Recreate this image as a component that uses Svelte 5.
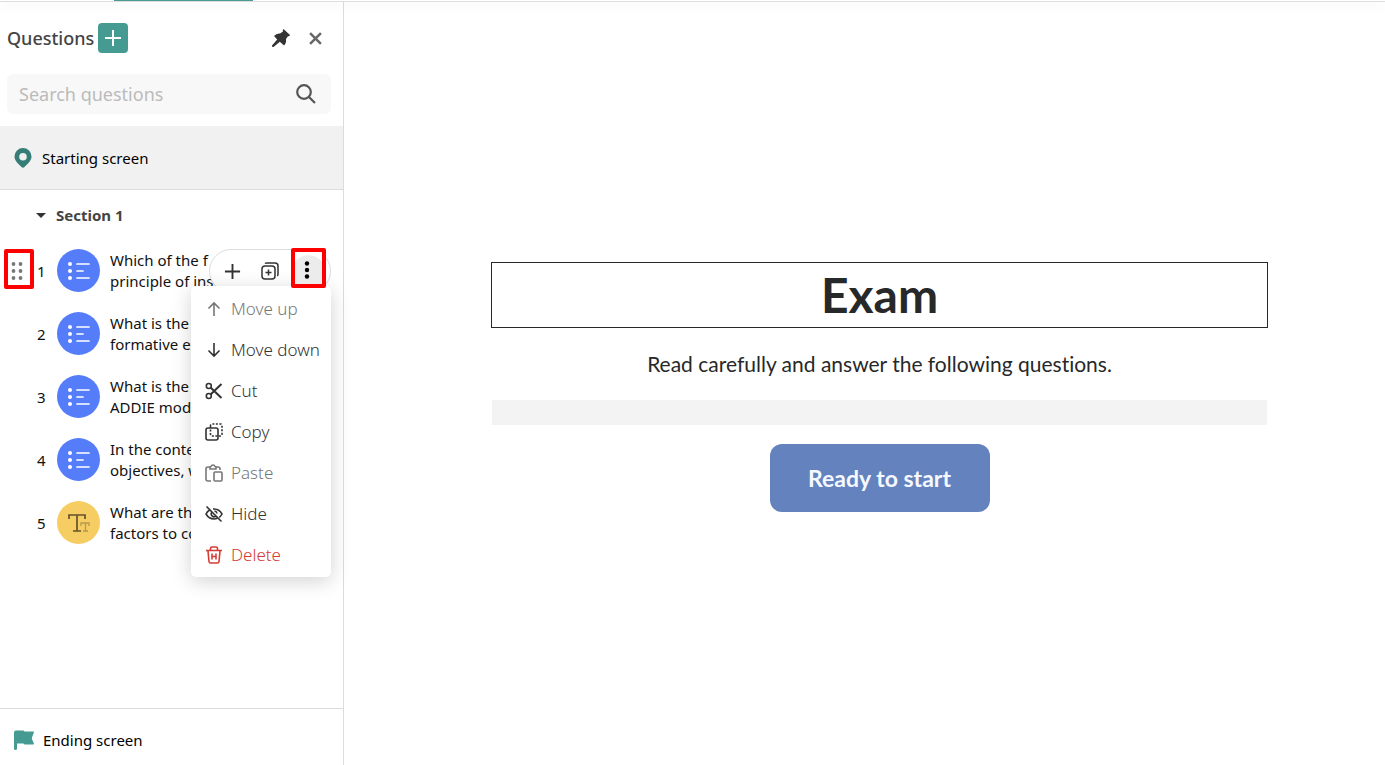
<script lang="ts">
	type Question = { lines: string[]; kind: 'choice' | 'text' }

	const questions: Question[] = [
		{ lines: ['Which of the f', 'principle of ins'], kind: 'choice' },
		{ lines: ['What is the', 'formative e'], kind: 'choice' },
		{ lines: ['What is the', 'ADDIE mod'], kind: 'choice' },
		{ lines: ['In the conte', 'objectives, w'], kind: 'choice' },
		{ lines: ['What are th', 'factors to co'], kind: 'text' },
	]

	const actions = [
		{ id: 'up', label: 'Move up', disabled: true },
		{ id: 'down', label: 'Move down' },
		{ id: 'cut', label: 'Cut' },
		{ id: 'copy', label: 'Copy' },
		{ id: 'paste', label: 'Paste', disabled: true },
		{ id: 'hide', label: 'Hide' },
		{ id: 'delete', label: 'Delete' },
	]

	let search = $state('')
	let menuOpen = $state(true)
</script>

{#snippet actionIcon(id: string)}
	<svg class="action-icon" viewBox="0 0 18 18" aria-hidden="true">
		{#if id === 'up'}
			<path d="M9 16V3M3.5 8.5 9 3l5.5 5.5" />
		{:else if id === 'down'}
			<path d="M9 2v13M3.5 9.5 9 15l5.5-5.5" />
		{:else if id === 'cut'}
			<circle cx="3.8" cy="4" r="2.5" />
			<circle cx="3.8" cy="14" r="2.5" />
			<path d="M5.8 5.7 16.5 16M5.8 12.3 16.5 2" stroke-width="2" />
		{:else if id === 'copy'}
			<rect x="1" y="5" width="12" height="12" rx="2" />
			<path d="M5.5 3.5V2.5Q5.5 1 7 1h8.5Q17 1 17 2.5v9q0 1.5-1.5 1.5H7q-1.5 0-1.5-1.5V3" stroke-dasharray="2 1.5" />
		{:else if id === 'paste'}
			<path d="M6 17H3q-2 0-2-2V5q0-2 2-2h2M11 3h2q2 0 2 2v1" />
			<path d="M5 5V3.5q0-1 1-1Q6.5 1 8 1t2 1.5q1 0 1 1V5z" />
			<rect x="9" y="8" width="8" height="9" rx="1" />
		{:else if id === 'hide'}
			<path d="M5.5 4.5Q2.5 6 1 9q3 5 8 5 1.8 0 3.3-.7M8 4q6-.5 9 5-1 2-2.8 3.3M6.5 7.5a3 3 0 0 0 4 4M9.5 6q2.2.3 2.5 2.500M1.5 1.500l15 15" />
		{:else}
			<path d="M1 4.5h16M5.5 4V2.5Q5.5 1 7 1h4q1.5 0 1.5 1.5V4M3 5l1 10.500Q4.2 17 5.500 17h7q1.300 0 1.500-1.500L15 5" />
			<path d="M7 7.500v6M11 7.500v6M7 10.500h4" />
		{/if}
	</svg>
{/snippet}

<div class="page">
	<div class="topbar"><span class="active-tab"></span></div>

	<div class="workspace">
		<aside class="sidebar">
			<header class="panel-head">
				<h2>Questions</h2>
				<button class="add" aria-label="Add question">
					<svg viewBox="0 0 16 16"><path d="M8 0v16M0 8h16" /></svg>
				</button>
				<button class="icon-btn pin" aria-label="Pin panel">
					<svg viewBox="0 0 18 18">
						<path d="M11.500 0 18 6Q17.500 7.500 16 7.200L14 10Q14.500 14 12 16.500L7.800 12.800 1.500 18 0 17.800V16.500L5.200 10.500 2 7Q4.500 4 8 4.500L11 2.500Q10.300 1 11.500 0Z" />
					</svg>
				</button>
				<button class="icon-btn close" aria-label="Close panel">
					<svg viewBox="0 0 12 12"><path d="M1 1l10 10M11 1 1 11" /></svg>
				</button>
			</header>

			<label class="search">
				<input type="text" placeholder="Search questions" aria-label="Search questions" bind:value={search} />
				<svg viewBox="0 0 20 20" aria-hidden="true">
					<circle cx="8" cy="8" r="6.8" />
					<path d="M13 13l6 6" />
				</svg>
			</label>

			<a class="screen-link starting" href="#starting">
				<svg viewBox="0 0 18 20" aria-hidden="true">
					<path fill-rule="evenodd" d="M9 0a8.5 8.5 0 0 1 8.5 8.5c0 4-3 6.5-7 10.5q-1.5 1.3-3 0c-4-4-7-6.5-7-10.5A8.5 8.5 0 0 1 9 0zm0 5a3.8 3.8 0 1 0 0 7.6A3.8 3.8 0 0 0 9 5z" />
				</svg>
				Starting screen
			</a>

			<button class="section-head">
				<svg viewBox="0 0 10 5" aria-hidden="true"><path d="M0 0h10L5 5z" /></svg>
				Section 1
			</button>

			<ol class="questions">
				{#each questions as question, i}
					<li>
						{#if i === 0}
							<button class="drag marked" aria-label="Drag question">
								<svg viewBox="0 0 12 20">
									{#each [3, 10, 17] as y}
										<circle cx="2.5" cy={y} r="1.9" />
										<circle cx="9.5" cy={y} r="1.9" />
									{/each}
								</svg>
							</button>
						{/if}
						<span class="number">{i + 1}</span>
						<span class="badge {question.kind}">
							{#if question.kind === 'choice'}
								<svg viewBox="0 0 22 16" aria-hidden="true">
									<g class="dots">
										<circle cx="2" cy="1" r="2" />
										<circle cx="2" cy="8" r="2" />
										<circle cx="2" cy="15" r="2" />
									</g>
									<path d="M9 1h12M9 8h6M9 15h12" />
								</svg>
							{:else}
								<svg viewBox="0 0 22 18" aria-hidden="true">
									<path d="M1 5V1h16v4M9 1v16M5 17h8" />
									<path class="small" d="M13 12V9h8v3M17.500 9v8M15 17h5" />
								</svg>
							{/if}
						</span>
						<span class="text">
							{#each question.lines as line}
								<span>{line}</span>
							{/each}
						</span>

						{#if i === 0}
							<div class="tools">
								<button class="tool" aria-label="Add below">
									<svg viewBox="0 0 18 18"><path d="M9 1v16M1 9h16" stroke-width="2" /></svg>
								</button>
								<button class="tool" aria-label="Duplicate">
									<svg viewBox="0 0 18 18">
										<rect x="1" y="4" width="13" height="13" rx="3" />
										<path d="M4 1.5Q4.5 1 6 1h8q3 0 3 3v8q0 1.5-.7 2M7.5 7.5v6M4.5 10.5h6" />
									</svg>
								</button>
								<button class="more marked" aria-label="More actions" onclick={() => (menuOpen = !menuOpen)}>
									<svg viewBox="0 0 6 18">
										<circle cx="3" cy="2.5" r="2.2" />
										<circle cx="3" cy="9" r="2.2" />
										<circle cx="3" cy="15.5" r="2.2" />
									</svg>
								</button>
							</div>

							{#if menuOpen}
								<div class="menu">
									{#each actions as action}
										<button class={action.id} disabled={action.disabled}>
											{@render actionIcon(action.id)}
											{action.label}
										</button>
									{/each}
								</div>
							{/if}
						{/if}
					</li>
				{/each}
			</ol>

			<a class="screen-link ending" href="#ending">
				<svg viewBox="0 0 20 20" aria-hidden="true">
					<path d="M0 2.5Q0 .5 2 .5h7q1 0 1.5 1H19.5q.8.3.3 1.2L18 7.5q-.3 1 0 1.7l1.8 4q.4 1.3-.8 1.3H11q-1 0-1.5-.9H3V18.5Q3 20 1.5 20T0 18.5z" />
				</svg>
				Ending screen
			</a>
		</aside>

		<main>
			<h1>Exam</h1>
			<p>Read carefully and answer the following questions.</p>
			<div class="placeholder"></div>
			<button class="start">Ready to start</button>
		</main>
	</div>
</div>

<style>
	:global(body) {
		margin: 0;
		background: #fff;
	}

	.page {
		min-height: 100vh;
		display: flex;
		flex-direction: column;
		font-family: 'Noto Sans', sans-serif;
		font-size: 15px;
		color: #111;
	}

	button {
		display: flex;
		align-items: center;
		justify-content: center;
		padding: 0;
		border: 0;
		background: none;
		font: inherit;
		color: inherit;
		cursor: pointer;
	}

	svg {
		flex: none;
		overflow: visible;
	}

	.topbar {
		position: relative;
		display: flex;
		border-bottom: 1px solid #dedede;
		box-shadow: 0 2px 14px rgb(0 0 0 / 0.12);
	}

	.active-tab {
		width: 139px;
		height: 1px;
		margin-left: 114px;
		background: #459b91;
	}

	.workspace {
		flex: 1;
		display: flex;
	}

	.sidebar {
		box-sizing: border-box;
		width: 344px;
		flex: none;
		display: flex;
		flex-direction: column;
		border-right: 1px solid #dcdcdc;
	}

	.panel-head {
		display: flex;
		align-items: center;
		height: 72px;
		padding: 0 21px 0 7px;
	}

	h2 {
		margin: 0 4px 0 0;
		font-size: 18px;
		font-weight: 500;
		color: #444;
	}

	.add {
		width: 30px;
		height: 30px;
		border-radius: 4px;
		background: #459b91;
	}

	.add svg {
		width: 16px;
		fill: none;
		stroke: #fff;
		stroke-width: 2;
	}

	.icon-btn svg {
		width: 18px;
	}

	.pin {
		margin-left: auto;
		fill: #333;
	}

	.close {
		margin-left: 19px;
	}

	.close svg {
		width: 13px;
		fill: none;
		stroke: #666;
		stroke-width: 2.3;
	}

	.search {
		display: flex;
		align-items: center;
		height: 40px;
		margin: 0 12px 12px 7px;
		padding: 0 15px 0 12px;
		border-radius: 6px;
		background: #f8f8f8;
	}

	.search input {
		flex: 1;
		min-width: 0;
		padding: 0;
		border: 0;
		outline: 0;
		background: none;
		font: inherit;
		font-size: 18px;
	}

	.search input::placeholder {
		color: #bbb;
	}

	.search svg {
		width: 20px;
		fill: none;
		stroke: #555;
		stroke-width: 2.2;
	}

	.screen-link {
		display: flex;
		align-items: center;
		color: #000;
		text-decoration: none;
	}

	.starting {
		height: 63px;
		padding-left: 14px;
		gap: 10px;
		border-bottom: 1px solid #dcdcdc;
		background: #f1f1f1;
	}

	.starting svg {
		width: 18px;
		fill: #357d76;
	}

	.section-head {
		justify-content: flex-start;
		gap: 10px;
		height: 50px;
		padding-left: 36px;
		font-weight: 700;
		color: #444;
	}

	.section-head svg {
		width: 10px;
		fill: #333;
	}

	.questions {
		flex: 1;
		display: flex;
		flex-direction: column;
		gap: 20px;
		margin: 0;
		padding: 9px 0 0;
		list-style: none;
	}

	li {
		position: relative;
		display: flex;
		align-items: center;
		height: 43px;
		padding-left: 37px;
	}

	.number {
		width: 20px;
	}

	.badge {
		display: grid;
		place-items: center;
		width: 43px;
		height: 43px;
		margin-right: 10px;
		border-radius: 50%;
		background: #557dfa;
	}

	.badge svg {
		width: 22px;
		fill: none;
		stroke: #fff;
		stroke-width: 1.7;
		stroke-linecap: round;
	}

	.badge .dots {
		fill: #fff;
		stroke: none;
	}

	.badge.text {
		background: #f6cd62;
	}

	.badge.text svg {
		stroke: #64532b;
		stroke-linecap: butt;
	}

	.badge .small {
		stroke: #b7984e;
		stroke-width: 1.3;
	}

	.text > span {
		display: block;
		line-height: 21px;
		white-space: nowrap;
	}

	.marked {
		box-sizing: border-box;
		border: 4px solid #f00;
		border-radius: 2px;
	}

	.drag {
		position: absolute;
		top: 0;
		left: 4px;
		width: 30px;
		height: 40px;
		padding: 3px 4px 0 0;
	}

	.drag svg {
		width: 12px;
		fill: #777;
	}

	.tools {
		position: absolute;
		top: 0;
		left: 209px;
		box-sizing: border-box;
		display: flex;
		align-items: center;
		width: 122px;
		height: 44px;
		padding-left: 3px;
		border: 1px solid #ddd;
		border-radius: 22px;
		background: #fff;
	}

	.tool {
		width: 38px;
		height: 38px;
	}

	.tool svg {
		width: 18px;
		fill: none;
		stroke: #333;
		stroke-width: 1.5;
	}

	.tool:first-child svg {
		width: 17px;
	}

	/* the highlighted trigger stays above the open menu */
	.more {
		position: relative;
		z-index: 2;
		align-self: flex-start;
		width: 35px;
		height: 40px;
		margin: -2px 0 0 2px;
		padding: 4px 3px 0 0;
		background: radial-gradient(circle at 50% 65%, #ececec 17px, #fff 18px);
	}

	.more svg {
		width: 6px;
	}

	.menu {
		position: absolute;
		z-index: 1;
		top: 37px;
		left: 191px;
		width: 140px;
		padding: 2px 0;
		border-radius: 5px;
		background: #fff;
		box-shadow: 0 4px 20px rgb(0 0 0 / 0.18);
	}

	.menu button {
		justify-content: flex-start;
		gap: 8px;
		width: 100%;
		height: 41px;
		padding-left: 14px;
		font-size: 17px;
		font-weight: 300;
		color: #333;
		white-space: nowrap;
	}

	.menu button:disabled {
		color: #777;
	}

	.menu .delete {
		color: #d63c36;
	}

	.action-icon {
		width: 18px;
		fill: none;
		stroke: currentColor;
		stroke-width: 1.6;
	}

	.ending {
		height: 51px;
		padding: 5px 0 0 14px;
		gap: 9px;
		border-top: 1px solid #dcdcdc;
	}

	.ending svg {
		width: 20px;
		fill: #459b91;
	}

	main {
		flex: 1;
		display: flex;
		flex-direction: column;
		align-items: center;
		justify-content: center;
		padding: 7px 117px 0 147px;
		font-family: Lato, sans-serif;
		font-variant-ligatures: none;
		color: #272829;
	}

	h1 {
		box-sizing: border-box;
		width: 100%;
		margin: 0;
		border: 1px solid #272829;
		font-size: 48px;
		line-height: 64px;
		text-align: center;
	}

	p {
		margin: 20px 0;
		font-size: 21px;
		line-height: 32px;
	}

	.placeholder {
		align-self: stretch;
		height: 25px;
		margin: 0 1px 19px;
		background: #f3f3f3;
	}

	.start {
		width: 220px;
		height: 68px;
		border-radius: 12px;
		background: #6382be;
		font-size: 23px;
		font-weight: 700;
		color: #f5f8ff;
	}
</style>
